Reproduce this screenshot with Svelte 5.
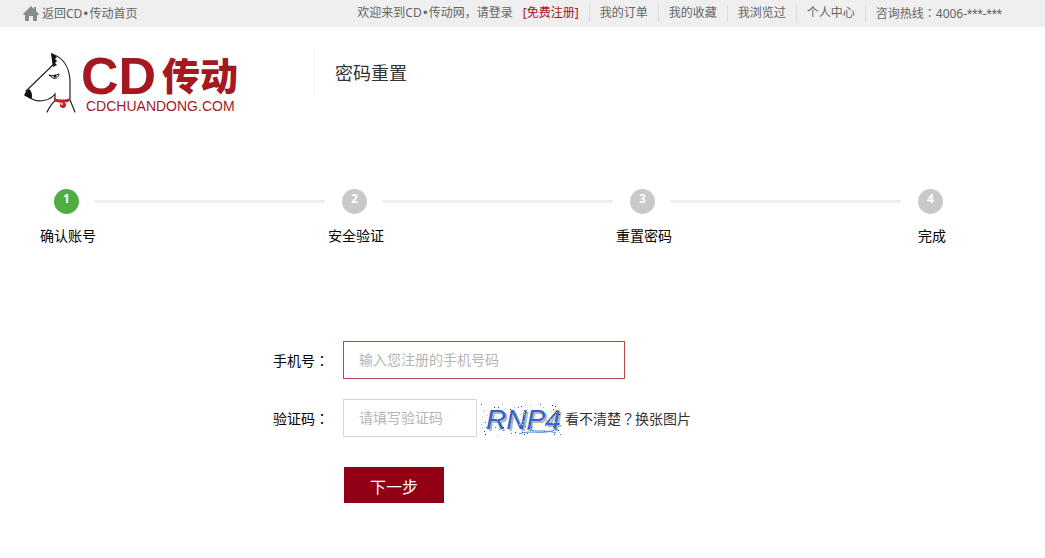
<script lang="ts">
	const links = ['我的订单', '我的收藏', '我浏览过', '个人中心'];
	const steps = ['确认账号', '安全验证', '重置密码', '完成'];

	let current = $state(0);
	let phone = $state('');
	let code = $state('');

	// background speckles of the captcha
	const speckles = Array.from({ length: 90 }, (_, i) => ({
		x: (i * 37 + ((i * i) % 13)) % 80,
		y: (i * 19 + ((i * i) % 7)) % 32,
		color: ['#3a62c8', '#e3d9a0', '#333333', '#b9c8ea', '#9ecbe8'][i % 5]
	}));

	function submit(event: SubmitEvent) {
		event.preventDefault();
	}
</script>

<div class="topbar">
	<a class="home" href="/">
		<svg width="16" height="16" viewBox="0 0 16 16" aria-hidden="true">
			<path d="M8 0 0 8l1 1h1v6h4v-5h4v5h4V9h1l1-1-3-3V1h-2v2z" fill="#8b8b8b" />
		</svg>
		<span>返回CD<span class="dot">•</span>传动首页</span>
	</a>
	<nav>
		<a class="login" href="/login">欢迎来到CD<span class="dot">•</span>传动网，请登录</a>
		<a class="register" href="/register">[免费注册]</a>
		{#each links as link}
			<a class="item" href="/">{link}</a>
		{/each}
		<span class="item hotline">咨询热线<span class="mark">：</span>4006-<span class="stars">***</span>-<span class="stars">***</span></span>
	</nav>
</div>

<header>
	<a class="logo" href="/" aria-label="CD传动">
		<svg width="220" height="72" viewBox="0 -6 220 72">
			<g fill="none" stroke="#222" stroke-width="1.2" stroke-linecap="round">
				<path d="M2 42 30 15 28 5C38 8 45 17 46 31V50" />
				<path d="M6 49C14 54 26 52 31 45V50" />
				<path d="M32 51C28 54 25 59 23 63M46 51 51 63" />
			</g>
			<path d="M27 4l6 4-2 2 2 2-2 2 2 2-4 2-1-6z" fill="#111" />
			<path d="M5 40C2 42-1 46 1 47l6 3c2-2 1-8-2-10z" fill="#111" />
			<path d="M25 26c3 1 6 1 10-1-1 4-3 5-6 4z" fill="#fff" stroke="#111" />
			<circle cx="31" cy="27" r="1.5" fill="#111" />
			<path d="M30 49c5 2 12 2 16 0v3c-5 2-11 2-16 0z" fill="#c41f27" />
			<circle cx="39" cy="56" r="3" fill="#c41f27" />
			<circle cx="38" cy="55" r="1" fill="#fff" />
			<text class="logo-cd" x="57" y="45">CD</text>
			<text class="logo-name" x="138" y="41">传动</text>
			<text class="logo-domain" x="62" y="62">CDCHUANDONG.COM</text>
		</svg>
	</a>
	<h1>密码重置</h1>
</header>

<ol class="steps">
	{#each steps as step, i}
		<li class:active={i === current}>
			<div class="track">
				<span class="number">{i + 1}</span>
				{#if i < steps.length - 1}
					<span class="line"></span>
				{/if}
			</div>
			<span class="label">{step}</span>
		</li>
	{/each}
</ol>

<form onsubmit={submit}>
	<div class="row">
		<label for="phone">手机号<span class="mark">：</span></label>
		<input id="phone" class="phone" type="text" placeholder="输入您注册的手机号码" bind:value={phone} />
	</div>
	<div class="row">
		<label for="code">验证码<span class="mark">：</span></label>
		<input id="code" class="code" type="text" placeholder="请填写验证码" bind:value={code} />
		<svg class="captcha" width="80" height="32" viewBox="0 0 80 32">
			<text x="7" y="27" fill="#b5b5b5" aria-hidden="true">RNP4</text>
			<text x="5" y="25" fill="#2f62d0">RNP4</text>
			{#each speckles as s}
				<rect x={s.x} y={s.y} width="1" height="1" fill={s.color} />
			{/each}
			<path d="M38 30c12-5 24 2 38-5M46 25c10 4 18 0 29 4" fill="none" stroke="#4b8be0" />
		</svg>
		<a class="refresh" href="#captcha">看不清楚<span class="mark">？</span>换张图片</a>
	</div>
	<button type="submit">下一步</button>
</form>

<style>
	:global(body) {
		background: #fff;
		color: #000;
		font: 14px/20px 'Noto Sans', 'Noto Sans CJK SC', sans-serif;
	}

	a {
		color: inherit;
		text-decoration: none;
	}

	/* centred full-width punctuation */
	.mark {
		font-family: 'Noto Sans CJK TC', sans-serif;
	}

	.dot {
		font-family: 'DejaVu Sans', sans-serif;
	}

	.stars {
		font-family: Roboto, sans-serif;
	}

	.topbar {
		display: flex;
		justify-content: space-between;
		align-items: center;
		height: 27px;
		padding: 0 43px 0 23px;
		background: #efefef;
		color: #666;
		font-size: 12px;
		white-space: nowrap;
	}

	.home {
		display: flex;
		align-items: center;
		gap: 3px;
	}

	nav {
		display: flex;
		line-height: 16px;
	}

	.register {
		margin: 0 10px;
		color: #a4141c;
	}

	.item {
		padding: 0 10px;
		border-left: 1px solid #dcdcdc;
	}

	.hotline {
		padding-right: 0;
	}

	header {
		display: flex;
		align-items: flex-end;
		height: 54px;
		padding: 16px 24px 0;
	}

	.logo {
		display: flex;
		align-self: flex-start;
		width: 290px;
	}

	.logo svg {
		flex: none;
	}

	.logo text {
		fill: #a3191f;
	}

	.logo-cd {
		font: bold 52px 'Liberation Sans', sans-serif;
	}

	.logo-name {
		font: 900 38px 'Noto Sans CJK SC', sans-serif;
	}

	.logo-domain {
		font: 14px 'Liberation Sans', sans-serif;
	}

	h1 {
		margin: 0;
		padding-left: 20px;
		border-left: 1px solid #f3f3f3;
		color: #333;
		font-size: 18px;
		font-weight: normal;
		line-height: 48px;
	}

	.steps {
		display: flex;
		margin: 92px 85px 0 40px;
		padding: 0;
		list-style: none;
	}

	.steps li {
		flex: 1;
	}

	.steps li:last-child {
		flex: 0 0 56px;
	}

	.track {
		display: flex;
		align-items: center;
		gap: 15px;
		padding: 0 3px 0 14px;
	}

	.number {
		flex: none;
		width: 25px;
		height: 25px;
		border-radius: 50%;
		background: #c9c9c9;
		color: #fff;
		font-size: 12px;
		font-weight: bold;
		line-height: 20px;
		text-align: center;
	}

	.active .number {
		background: #4fae43;
	}

	.line {
		flex: 1;
		height: 3px;
		border-radius: 2px;
		background: #eee;
	}

	.label {
		display: block;
		width: 56px;
		margin-top: 12px;
		text-align: center;
	}

	form {
		margin: 95px 40px 0 273px;
	}

	.row {
		display: flex;
		align-items: center;
		margin-bottom: 20px;
	}

	label {
		width: 70px;
	}

	input {
		box-sizing: border-box;
		height: 38px;
		padding: 0 15px 2px;
		border: 1px solid #d6d6d6;
		outline: none;
		font: inherit;
	}

	input::placeholder {
		color: #b5b5b5;
	}

	.phone {
		width: 282px;
		border-color: #b2484f;
	}

	.code {
		width: 134px;
	}

	.captcha {
		margin: 4px 4px 0;
		overflow: visible;
	}

	.captcha text {
		font: italic 28px 'Liberation Sans', sans-serif;
	}

	.refresh {
		color: #333;
	}

	button {
		width: 100px;
		height: 36px;
		margin: 10px 0 0 71px;
		padding: 4px 0 0;
		border: 0;
		background: #910014;
		color: #fff;
		font: inherit;
		font-size: 16px;
		cursor: pointer;
	}
</style>
